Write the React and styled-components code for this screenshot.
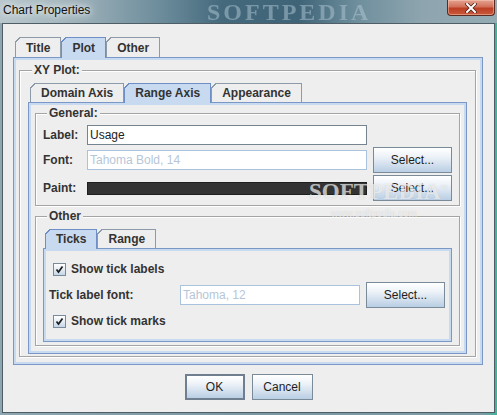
import React from 'react';
import styled, { createGlobalStyle } from 'styled-components';

const GlobalStyle = createGlobalStyle`
  html, body {
    margin: 0;
    padding: 0;
  }
  body {
    background: #6f8c99;
    font-family: "Liberation Sans", Arial, sans-serif;
  }
`;

const Window = styled.div`
  position: relative;
  width: 497px;
  height: 415px;
  display: flex;
  flex-direction: column;
  overflow: hidden;
  background: linear-gradient(90deg, #8ea6b0 0%, #7b97a3 50%, #7f9ba6 97%, #3fb59a 100%);
`;

const TitleBar = styled.div`
  position: relative;
  flex: none;
  height: 23px;
  display: flex;
  align-items: flex-start;
  background: linear-gradient(90deg, #b9c7cc 0%, #9fb2ba 15%, #6d8d9c 32%, #44697c 45%, #3f6477 60%, #6f8f9d 72%, #8ea5af 85%, #95abb4 100%);
`;

const TitleText = styled.span`
  padding: 3px 0 0 3px;
  font: 12px/14px "Liberation Sans", Arial, sans-serif;
  color: #111;
  text-shadow: 0 0 5px #e8eef0, 0 0 9px #dfe7ea, 0 0 12px #d4dee2;
`;

const TitleMark = styled.span`
  position: absolute;
  left: 207px;
  top: 1px;
  font: bold 24px/22px "Liberation Serif", "Times New Roman", serif;
  letter-spacing: 3px;
  color: rgba(178, 200, 214, 0.5);
  filter: blur(0.7px);
`;

const CloseButton = styled.div`
  margin-left: auto;
  margin-right: 2px;
  width: 48px;
  height: 16px;
  box-sizing: border-box;
  display: flex;
  align-items: center;
  justify-content: center;
  border: 1px solid #5b2a22;
  border-top: none;
  border-radius: 0 0 4px 4px;
  background: linear-gradient(180deg, #e3a392 0%, #d3705a 45%, #bd3e24 55%, #c85a3c 100%);
  box-shadow: inset 0 0 0 1px rgba(255, 210, 190, 0.45);
`;

const Client = styled.div`
  flex: 1;
  margin: 0 2px 2px 2px;
  border: 1px solid #4f5d66;
  background: #eeeeee;
  display: flex;
  flex-direction: column;
  padding: 13px 11px 12px 10px;
  position: relative;
`;

const TabPane = styled.div`
  display: flex;
  flex-direction: column;
`;

const TabRow = styled.div`
  display: flex;
  padding-left: ${p => p.$indent}px;
  position: relative;
  z-index: 1;
`;

const Tab = styled.div`
  position: relative;
  box-sizing: border-box;
  height: ${p => (p.$active ? p.$h + 1 : p.$h)}px;
  margin-bottom: ${p => (p.$active ? '-1px' : '0')};
  padding: 0 10px ${p => (p.$active ? '1px' : '0')};
  display: flex;
  align-items: center;
  font: bold 12px "Liberation Sans", Arial, sans-serif;
  color: #333;
  border: 1px solid ${p => (p.$active ? '#6f8ec6' : '#8c9aa9')};
  border-bottom: none;
  background: ${p => (p.$active ? '#c8daef' : '#eeeeee')};

  &::before {
    content: '';
    position: absolute;
    left: -1px;
    top: -1px;
    width: 6px;
    height: 6px;
    background: linear-gradient(
      135deg,
      #eeeeee 0,
      #eeeeee calc(50% - 0.8px),
      ${p => (p.$active ? '#6f8ec6' : '#8c9aa9')} calc(50% - 0.8px),
      ${p => (p.$active ? '#6f8ec6' : '#8c9aa9')} calc(50% + 0.6px),
      transparent calc(50% + 0.6px)
    );
  }
`;

const Panel = styled.div`
  border: 1px solid #7a97c6;
  box-shadow: inset 0 0 0 2px #c8daef;
  padding: ${p => p.$pad};
  display: flex;
  flex-direction: column;
  gap: ${p => p.$gap || 0}px;
`;

const Group = styled.fieldset`
  margin: 0;
  padding: ${p => p.$pad};
  min-width: 0;
  border: 1px solid #a4a4a4;
  box-shadow: inset 1px 1px 0 #ffffff, 1px 1px 0 #ffffff;
  display: flex;
  flex-direction: column;
`;

const Legend = styled.legend`
  margin-left: 4px;
  padding: 0 2px;
  font: bold 12px/14px "Liberation Sans", Arial, sans-serif;
  color: #333;
  background: #eeeeee;
`;

const FormGrid = styled.div`
  display: grid;
  grid-template-columns: 38px 280px 79px;
  grid-template-rows: 20px 26px 26px;
  column-gap: 6px;
  row-gap: 2px;
  align-items: center;
`;

const Label = styled.span`
  font: bold 12px "Liberation Sans", Arial, sans-serif;
  color: #333;
  white-space: nowrap;
`;

const Field = styled.div`
  box-sizing: border-box;
  height: 20px;
  padding: 0 2px;
  display: flex;
  align-items: center;
  background: #ffffff;
  border: 1px solid ${p => (p.$disabled ? '#a9c3df' : '#76848f')};
  font: 12px "Liberation Sans", Arial, sans-serif;
  color: ${p => (p.$disabled ? '#b6c6d8' : '#222')};
  white-space: nowrap;
  overflow: hidden;
`;

const Swatch = styled.div`
  height: 13px;
  box-sizing: border-box;
  background: #333333;
  border: 1px solid #1f1f1f;
`;

const Button = styled.button`
  box-sizing: border-box;
  width: ${p => p.$w || 79}px;
  height: 26px;
  padding: 0;
  border: ${p => (p.$default ? '2px solid #6f7f8f' : '1px solid #7a8a99')};
  background: linear-gradient(180deg, #ffffff 0%, #eef3f8 35%, #b9cee4 100%);
  font: 12px "Liberation Sans", Arial, sans-serif;
  color: #1e1e1e;
  cursor: pointer;
`;

const CheckRow = styled.div`
  height: 20px;
  display: flex;
  align-items: center;
  gap: 5px;
  padding-left: 4px;
`;

const Box = styled.span`
  box-sizing: border-box;
  width: 13px;
  height: 13px;
  border: 1px solid #7a8a99;
  background: linear-gradient(180deg, #ffffff 0%, #dfe8f2 60%, #c4d5e8 100%);
  display: flex;
  align-items: center;
  justify-content: center;
`;

const FontRow = styled.div`
  display: grid;
  grid-template-columns: 125px 180px 79px;
  column-gap: 6px;
  height: 26px;
  align-items: center;
`;

const Footer = styled.div`
  margin-top: 9px;
  display: flex;
  justify-content: center;
  gap: 7px;
  padding-left: 1px;
`;

const Watermark = styled.span`
  position: absolute;
  left: ${p => p.$x}px;
  top: ${p => p.$y}px;
  font: ${p => p.$font};
  color: rgba(255, 255, 255, 0.65);
  text-shadow: 0 0 1px rgba(120, 120, 120, 0.35);
  pointer-events: none;
  white-space: nowrap;
`;

const Check = () => (
  <svg width="9" height="9" viewBox="0 0 9 9">
    <path d="M1.5 4.5 L3.5 7 L7.5 1.5" fill="none" stroke="#1c1c1c" strokeWidth="1.7" />
  </svg>
);

const CheckBox = ({ children }) => (
  <CheckRow>
    <Box>
      <Check />
    </Box>
    <Label>{children}</Label>
  </CheckRow>
);

const Tabs = ({ items, active, h, indent }) => (
  <TabRow $indent={indent}>
    {items.map(t => (
      <Tab key={t} $h={h} $active={t === active}>
        {t}
      </Tab>
    ))}
  </TabRow>
);

export default function App() {
  return (
    <>
      <GlobalStyle />
      <Window>
        <TitleBar>
          <TitleText>Chart Properties</TitleText>
          <TitleMark>SOFTPEDIA</TitleMark>
          <CloseButton>
            <svg width="12" height="10" viewBox="0 0 12 10">
              <path d="M2 1 L10 9 M10 1 L2 9" stroke="#4a1c14" strokeWidth="3.4" strokeLinecap="square" />
              <path d="M2 1 L10 9 M10 1 L2 9" stroke="#ffffff" strokeWidth="2" strokeLinecap="square" />
            </svg>
          </CloseButton>
        </TitleBar>
        <Client>
          <TabPane>
            <Tabs items={['Title', 'Plot', 'Other']} active="Plot" h={20} indent={2} />
            <Panel $pad="5px 6px 7px 5px">
              <Group $pad="6px 8px 2px 8px">
                <Legend>XY Plot:</Legend>
                <TabPane>
                  <Tabs items={['Domain Axis', 'Range Axis', 'Appearance']} active="Range Axis" h={19} indent={2} />
                  <Panel $pad="3px 6px 7px 6px" $gap={3}>
                    <Group $pad="5px 7px 4px 7px">
                      <Legend>General:</Legend>
                      <FormGrid>
                        <Label>Label:</Label>
                        <Field>Usage</Field>
                        <span />
                        <Label>Font:</Label>
                        <Field $disabled>Tahoma Bold, 14</Field>
                        <Button>Select...</Button>
                        <Label>Paint:</Label>
                        <Swatch />
                        <Button>Select...</Button>
                      </FormGrid>
                    </Group>
                    <Group $pad="6px 7px 3px 7px">
                      <Legend>Other</Legend>
                      <TabPane>
                        <Tabs items={['Ticks', 'Range']} active="Ticks" h={19} indent={2} />
                        <Panel $pad="10px 6px 10px 5px" $gap={3}>
                          <CheckBox>Show tick labels</CheckBox>
                          <FontRow>
                            <Label>Tick label font:</Label>
                            <Field $disabled>Tahoma, 12</Field>
                            <Button>Select...</Button>
                          </FontRow>
                          <CheckBox>Show tick marks</CheckBox>
                        </Panel>
                      </TabPane>
                    </Group>
                  </Panel>
                </TabPane>
              </Group>
            </Panel>
          </TabPane>
          <Footer>
            <Button $w={60} $default>OK</Button>
            <Button $w={61}>Cancel</Button>
          </Footer>
          <Watermark $x={306} $y={152} $font={'bold 23px/24px "Liberation Serif", serif'}>
            SOFTPEDIA<sup style={{ fontSize: 7 }}>™</sup>
          </Watermark>
          <Watermark $x={328} $y={184} $font={'10px/12px "Liberation Sans", sans-serif'}>
            www.softpedia.com
          </Watermark>
        </Client>
      </Window>
    </>
  );
}
